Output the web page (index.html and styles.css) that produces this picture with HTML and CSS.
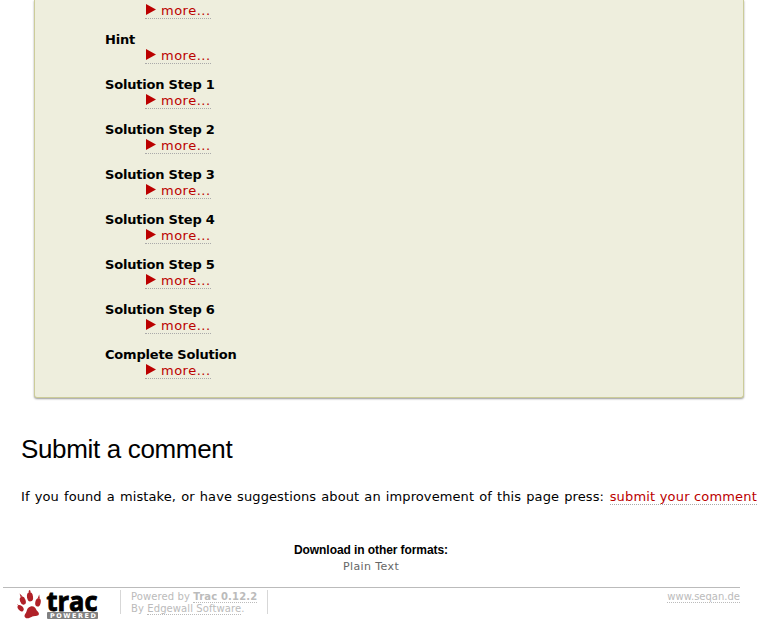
FILE: index.html
```html
<!DOCTYPE html>
<html lang="en">
<head>
<meta charset="utf-8">
<title>Submit a comment</title>
<link rel="stylesheet" href="styles.css">
</head>
<body>
<main class="page">
  <section class="assignment">
    <dl class="steps">
      <dd><a class="more"><i class="arrow"></i><span>more...</span></a></dd>
      <dt>Hint</dt>
      <dd><a class="more"><i class="arrow"></i><span>more...</span></a></dd>
      <dt>Solution Step 1</dt>
      <dd><a class="more"><i class="arrow"></i><span>more...</span></a></dd>
      <dt>Solution Step 2</dt>
      <dd><a class="more"><i class="arrow"></i><span>more...</span></a></dd>
      <dt>Solution Step 3</dt>
      <dd><a class="more"><i class="arrow"></i><span>more...</span></a></dd>
      <dt>Solution Step 4</dt>
      <dd><a class="more"><i class="arrow"></i><span>more...</span></a></dd>
      <dt>Solution Step 5</dt>
      <dd><a class="more"><i class="arrow"></i><span>more...</span></a></dd>
      <dt>Solution Step 6</dt>
      <dd><a class="more"><i class="arrow"></i><span>more...</span></a></dd>
      <dt>Complete Solution</dt>
      <dd><a class="more"><i class="arrow"></i><span>more...</span></a></dd>
    </dl>
  </section>
  <h1>Submit a comment</h1>
  <p class="comment"><span class="prompt">If you found a mistake, or have suggestions about an improvement of this page press:</span><a class="submit">submit your comment</a></p>
  <section class="formats">
    <h3>Download in other formats:</h3>
    <a>Plain Text</a>
  </section>
</main>
<footer class="footer">
  <svg class="logo" width="84" height="32" viewBox="0 0 84 32">
    <g fill="#b02128">
      <ellipse cx="13" cy="6.8" rx="3" ry="4.6" transform="rotate(-8 13 6.8)"/>
      <ellipse cx="5.8" cy="10.6" rx="2.8" ry="4.2" transform="rotate(-20 5.8 10.6)"/>
      <ellipse cx="12.6" cy="1.4" rx=".9" ry="1.5"/>
      <ellipse cx="21" cy="12.4" rx="2.7" ry="4.2" transform="rotate(12 21 12.4)"/>
      <ellipse cx="3.6" cy="18.2" rx="2.4" ry="3.6" transform="rotate(-42 3.6 18.2)"/>
      <path d="M13.6 16.4C16.4 15.6 18.4 17.4 19.2 19.4C20 21.4 22.6 22 21.8 24.6C20.8 26.8 17.5 25.6 15 26.8C12.6 28 9.8 29.4 8 27.2C6.6 25 9 23.6 9.6 21.2C10 19 11.2 17 13.6 16.4Z"/>
      <path d="M3.6 7L2.6 3.4L5.6 6.6ZM20.6 8.4L22.2 4.6L22.8 8.6ZM1.6 16.4L0 14L3.6 16.4Z"/>
    </g>
    <text class="wordmark" x="29.5" y="20.5" textLength="51" lengthAdjust="spacingAndGlyphs">trac</text>
    <rect x="30" y="22" width="51" height="7" rx="1" fill="#808080"/>
    <text class="powered" x="33" y="28" textLength="46" lengthAdjust="spacing">POWERED</text>
  </svg>
  <p class="credits">Powered by <a class="version">Trac 0.12.2</a><br>By <a>Edgewall Software</a>.</p>
  <a class="site">www.seqan.de</a>
</footer>
</body>
</html>
```
FILE: styles.css
```css
* { box-sizing: border-box; }
body {
  margin: 0;
  width: 757px;
  height: 633px;
  overflow: hidden;
  background: #fff;
  color: #000;
  font: 13px/16px "DejaVu Sans", sans-serif;
}
.page { height: 587px; }
.assignment {
  width: 710px;
  height: 398px;
  margin-left: 34px;
  padding: 3px 0 0 70px;
  background: #eeeedd;
  border: 1px solid #cccc99;
  border-top: 0;
  border-radius: 0 0 3px 3px;
  box-shadow: 0 1px 2px #999;
}
.steps { margin: 0; }
dt { height: 16px; font-weight: bold; letter-spacing: -.2px; }
dd { display: flex; height: 16px; margin: 0 0 13px 40px; }
.more {
  display: flex;
  width: 66px;
  height: 16px;
  color: #bb0000;
  border-bottom: 1px dotted #aaa;
  letter-spacing: .5px;
}
.arrow {
  width: 10px;
  height: 11px;
  margin: 1px 5px 0 1px;
  background: #bb0000;
  clip-path: polygon(0 0, 100% 50%, 0 100%);
}
h1 {
  margin: 36px 0 0 21px;
  font: 26px/30px "Liberation Sans", Arial, sans-serif;
  letter-spacing: -.34px;
}
.comment { display: flex; margin: 25px 0 0 21px; white-space: nowrap; }
.prompt { width: 589px; letter-spacing: .1px; word-spacing: .85px; }
.submit {
  height: 16px;
  color: #bb0000;
  border-bottom: 1px dotted #aaa;
  letter-spacing: .18px;
}
.formats { width: 742px; margin-top: 37px; text-align: center; }
.formats h3 {
  margin: 0;
  font: bold 12px/16px "Liberation Sans", Arial, sans-serif;
  letter-spacing: -.08px;
}
.formats a { display: block; margin-top: 1px; color: #666; font-size: 11px; letter-spacing: .4px; }
.footer {
  display: flex;
  width: 737px;
  height: 34px;
  margin-left: 3px;
  border-top: 1px solid #bbb;
  color: #bbb;
  font-size: 10px;
  line-height: 12px;
}
.logo { margin: 2px 0 0 14px; overflow: visible; }
.wordmark {
  fill: #000;
  stroke: #000;
  stroke-width: .9px;
  font: bold 27px "Open Sans", sans-serif;
}
.powered { fill: #fff; font: bold 6.5px "DejaVu Sans", sans-serif; }
.credits {
  width: 148px;
  height: 24px;
  margin: 2px 0 0 19px;
  padding: 1px 0 0 10px;
  border: solid #d7d7d7;
  border-width: 0 1px;
  white-space: nowrap;
  letter-spacing: .1px;
}
.credits a, .site { border-bottom: 1px dotted #bbb; }
.credits .version { font-weight: bold; letter-spacing: .18px; }
.site { height: 13px; margin: 2px 0 0 auto; padding-top: 1px; line-height: 11px; }
```
